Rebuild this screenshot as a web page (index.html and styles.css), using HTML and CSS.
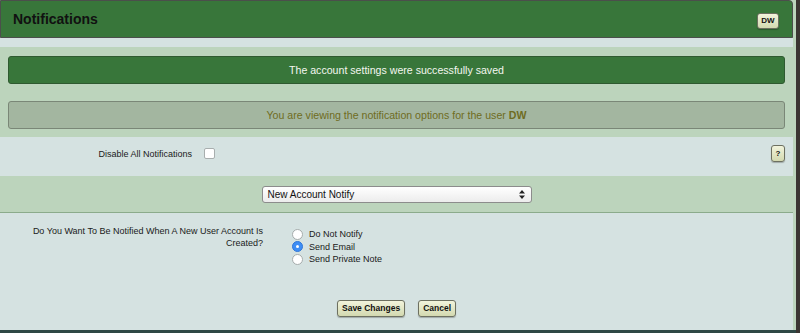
FILE: index.html
```html
<!DOCTYPE html>
<html lang="en">
<head>
    <meta charset="UTF-8">
    <title>Notifications</title>
    <link rel="stylesheet" href="styles.css">
</head>
<body>
    <div class="page">
        <header class="titlebar">
            <h1>Notifications</h1>
            <button class="small-btn user-btn">DW</button>
        </header>
        <div class="strip"></div>

        <div class="messages">
            <div class="msg msg-success">The account settings were successfully saved</div>
            <div class="msg msg-info">You are viewing the notification options for the user <b>DW</b></div>
        </div>

        <div class="row row-light disable-row">
            <label class="disable-label" for="disable-all">Disable All Notifications</label>
            <input type="checkbox" id="disable-all" class="check">
            <span class="spacer"></span>
            <button class="small-btn help-btn">?</button>
        </div>

        <div class="row row-green select-row">
            <div class="select">
                <span>New Account Notify</span>
                <svg class="arrows" width="6" height="9" viewBox="0 0 6 9">
                    <path d="M3 0 L6 3.5 L0 3.5 Z M3 9 L6 5.5 L0 5.5 Z" fill="#222"/>
                </svg>
            </div>
        </div>

        <div class="row row-light form-row">
            <div class="option-line">
                <div class="question">Do You Want To Be Notified When A New User Account Is Created?</div>
                <div class="radios">
                    <label class="radio"><span class="dot"></span>Do Not Notify</label>
                    <label class="radio"><span class="dot checked"></span>Send Email</label>
                    <label class="radio"><span class="dot"></span>Send Private Note</label>
                </div>
            </div>
            <div class="actions">
                <button class="small-btn action-btn">Save Changes</button>
                <button class="small-btn action-btn">Cancel</button>
            </div>
        </div>
        <div class="footer"></div>
    </div>
</body>
</html>
```

FILE: styles.css
```css
:root {
    --dark-green: #38763a;
    --light-green: #bcd4bc;
    --light-blue: #d5e2e1;
    --olive: #6f6c22;
}

body {
    margin: 0;
    background-color: #3b3532;
    font-family: "Liberation Sans", Arial, sans-serif;
    font-size: 9px;
    color: #1a1a1a;
}

.page {
    width: 796px;
    height: 333px;
    background-color: var(--light-green);
    display: flex;
    flex-direction: column;
    overflow: hidden;
}

.titlebar {
    width: 793px;
    height: 38px;
    box-sizing: border-box;
    background-color: var(--dark-green);
    border: 1px solid #4b4f4b;
    border-radius: 0 4px 0 0;
    display: flex;
    align-items: center;
    justify-content: space-between;
    padding-left: 12px;
    padding-right: 13px;
}

.titlebar h1 {
    margin: 0;
    font-size: 14px;
    font-weight: bold;
    color: #111;
}

.small-btn {
    font-family: "Liberation Sans", Arial, sans-serif;
    font-weight: bold;
    color: #111;
    background: linear-gradient(#f2f4dc, #d3d9b0);
    border: 1px solid #6d7060;
    border-radius: 3px;
    box-shadow: 0 1px 1px rgba(0, 0, 0, 0.25);
    padding: 0;
    cursor: pointer;
}

.user-btn {
    width: 22px;
    height: 16px;
    font-size: 8px;
    margin-top: 3px;
}

.strip {
    width: 793px;
    height: 9px;
    background-color: var(--light-blue);
}

.messages {
    width: 777px;
    padding: 9px 8px 8px;
    display: flex;
    flex-direction: column;
    gap: 17px;
}

.msg {
    height: 26px;
    border-radius: 3px;
    display: flex;
    align-items: center;
    justify-content: center;
    font-size: 10.6px;
}

.msg-success {
    background-color: var(--dark-green);
    border: 1px solid #2f5a30;
    color: #f4f7f0;
}

.msg-info {
    background-color: #a3b6a0;
    border: 1px solid #7a8777;
    color: var(--olive);
}

.msg-info b {
    margin-left: 3px;
}

.row {
    width: 793px;
    display: flex;
    box-sizing: border-box;
}

.row-light {
    background-color: var(--light-blue);
}

.row-green {
    background-color: var(--light-green);
}

.disable-row {
    height: 39px;
    align-items: center;
    padding-right: 8px;
    padding-bottom: 6px;
}

.disable-label {
    width: 192px;
    text-align: right;
}

.check {
    appearance: none;
    width: 11px;
    height: 11px;
    margin: 0 0 0 12px;
    background: #fff;
    border: 1px solid #a8aeae;
    border-radius: 2px;
}

.spacer {
    flex: 1;
}

.help-btn {
    width: 14px;
    height: 17px;
    font-size: 8px;
}

.select-row {
    height: 37px;
    justify-content: center;
    align-items: center;
    border-bottom: 1px solid #8bab8b;
}

.select {
    width: 270px;
    height: 17px;
    box-sizing: border-box;
    background: linear-gradient(#ffffff, #ececec);
    border: 1px solid #8c8c8c;
    border-radius: 3px;
    display: flex;
    align-items: center;
    justify-content: space-between;
    padding: 0 6px 0 5px;
    font-size: 10px;
    color: #111;
}

.form-row {
    height: 117px;
    flex-direction: column;
    padding-top: 12px;
}

.option-line {
    display: flex;
    gap: 29px;
}

.question {
    width: 234px;
    margin-left: 29px;
    text-align: right;
    line-height: 12px;
}

.radios {
    display: flex;
    flex-direction: column;
    padding-top: 3px;
}

.radio {
    display: flex;
    align-items: center;
    gap: 6px;
    height: 12.5px;
}

.dot {
    width: 9px;
    height: 9px;
    border-radius: 50%;
    background: #fff;
    border: 1px solid #a6acac;
    display: flex;
    align-items: center;
    justify-content: center;
}

.dot.checked {
    background: #3d8ef5;
    border-color: #2f76d8;
}

.dot.checked::after {
    content: "";
    width: 3px;
    height: 3px;
    border-radius: 50%;
    background: #fff;
}

.actions {
    margin-top: 34px;
    display: flex;
    justify-content: center;
    gap: 13px;
}

.action-btn {
    height: 17px;
    font-size: 8.5px;
    padding: 0 4px;
}

.footer {
    width: 796px;
    height: 3px;
    background-color: #2f4845;
}
```
